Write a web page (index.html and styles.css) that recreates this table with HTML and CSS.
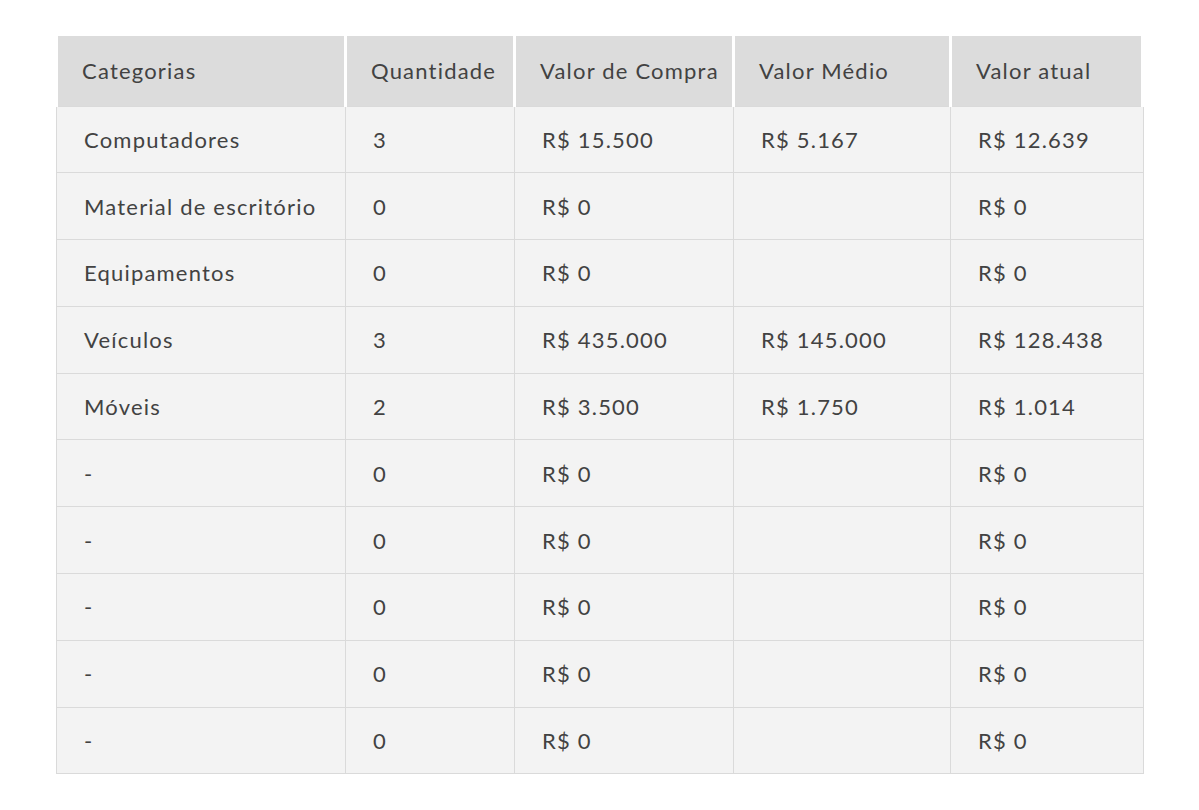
FILE: index.html
```html
<!DOCTYPE html>
<html lang="pt-BR">
<head>
<meta charset="utf-8">
<title>Categorias</title>
<link rel="stylesheet" href="styles.css">
</head>
<body>
<div class="page">
<table class="grid">
<colgroup>
<col class="c1"><col class="c2"><col class="c3"><col class="c4"><col class="c5">
</colgroup>
<thead>
<tr><th>Categorias</th><th>Quantidade</th><th>Valor de Compra</th><th>Valor Médio</th><th>Valor atual</th></tr>
</thead>
<tbody>
<tr><td>Computadores</td><td>3</td><td>R$ 15.500</td><td>R$ 5.167</td><td>R$ 12.639</td></tr>
<tr><td>Material de escritório</td><td>0</td><td>R$ 0</td><td></td><td>R$ 0</td></tr>
<tr><td>Equipamentos</td><td>0</td><td>R$ 0</td><td></td><td>R$ 0</td></tr>
<tr><td>Veículos</td><td>3</td><td>R$ 435.000</td><td>R$ 145.000</td><td>R$ 128.438</td></tr>
<tr><td>Móveis</td><td>2</td><td>R$ 3.500</td><td>R$ 1.750</td><td>R$ 1.014</td></tr>
<tr><td>-</td><td>0</td><td>R$ 0</td><td></td><td>R$ 0</td></tr>
<tr><td>-</td><td>0</td><td>R$ 0</td><td></td><td>R$ 0</td></tr>
<tr><td>-</td><td>0</td><td>R$ 0</td><td></td><td>R$ 0</td></tr>
<tr><td>-</td><td>0</td><td>R$ 0</td><td></td><td>R$ 0</td></tr>
<tr><td>-</td><td>0</td><td>R$ 0</td><td></td><td>R$ 0</td></tr>
</tbody>
</table>
</div>
</body>
</html>
```
FILE: styles.css
```css
html, body {
  margin: 0;
  padding: 0;
  background: #ffffff;
}
.page {
  padding: 32px 0 0 55px;
}
.grid {
  border-collapse: collapse;
  table-layout: fixed;
  width: 1087px;
  font-family: Lato, "Liberation Sans", sans-serif;
  font-size: 22px;
  letter-spacing: 1.2px;
  color: #424242;
}
.c1 { width: 289px; }
.c2 { width: 169px; }
.c3 { width: 219px; }
.c4 { width: 217px; }
.c5 { width: 193px; }
.grid th {
  height: 72px;
  padding: 0 0 0 24px;
  text-align: left;
  font-weight: 400;
  background: #dcdcdc;
  background-clip: padding-box;
  border: 3px solid #ffffff;
  border-bottom: 0;
  border-top-width: 4px;
  box-sizing: border-box;
  white-space: nowrap;
}
.grid th:last-child {
  border-right-width: 5px;
}
.grid td {
  height: 66.8px;
  padding: 0 0 0 27px;
  background: #f3f3f3;
  border: 1px solid #dadada;
  box-sizing: border-box;
  white-space: nowrap;
}
```
